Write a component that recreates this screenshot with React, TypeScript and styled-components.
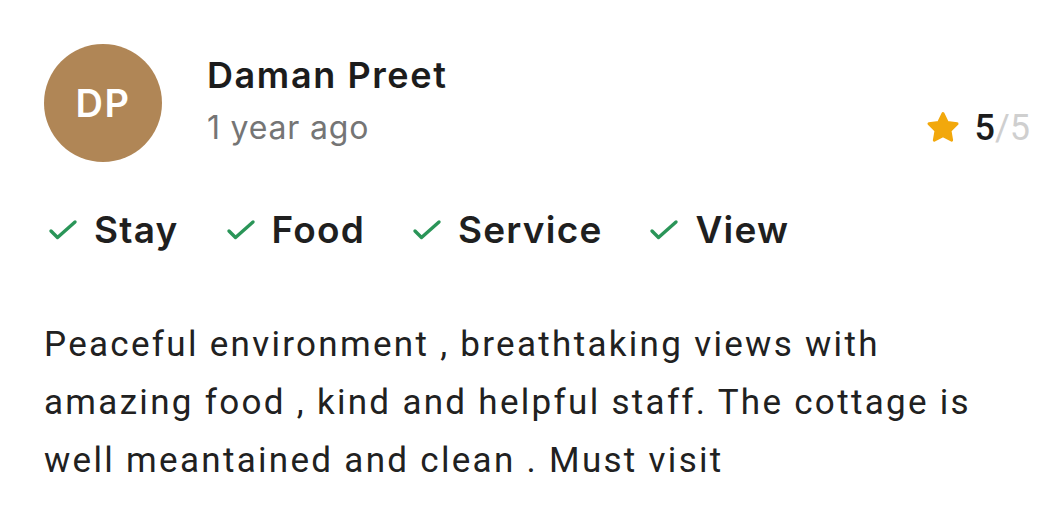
import type { ReactElement } from "react";
import styled, { createGlobalStyle } from "styled-components";

const TAGS = ["Stay", "Food", "Service", "View"];

const REVIEW_TEXT =
  "Peaceful environment , breathtaking views with amazing food , kind and helpful staff. The cottage is well meantained and clean . Must visit";

export default function App(): ReactElement {
  return (
    <>
      <GlobalStyle />
      <ReviewCard>
        <Header>
          <Avatar>DP</Avatar>
          <Info>
            <Name>Daman Preet</Name>
            <MetaRow>
              <Time>1 year ago</Time>
              <Rating>
                <StarIcon />
                <Score>5</Score>
                <OutOf>/5</OutOf>
              </Rating>
            </MetaRow>
          </Info>
        </Header>
        <TagRow>
          {TAGS.map((tag) => (
            <Tag key={tag}>
              <CheckIcon />
              {tag}
            </Tag>
          ))}
        </TagRow>
        <Body>{REVIEW_TEXT}</Body>
      </ReviewCard>
    </>
  );
}

function StarIcon(): ReactElement {
  return (
    <svg width="38" height="38" viewBox="0 0 24 24" aria-hidden="true">
      <path
        d="M12 2.8l2.75 5.6 6.15.9-4.45 4.35 1.05 6.1L12 16.9l-5.5 2.85 1.05-6.1L3.1 9.3l6.15-.9z"
        fill="#F2A80C"
        stroke="#F2A80C"
        strokeWidth="1.8"
        strokeLinejoin="round"
      />
    </svg>
  );
}

function CheckIcon(): ReactElement {
  return (
    <svg width="30" height="22" viewBox="0 0 30 22" aria-hidden="true">
      <polyline
        points="3,12 9.5,18.5 27,3"
        fill="none"
        stroke="#2A9558"
        strokeWidth="3.4"
        strokeLinecap="round"
        strokeLinejoin="round"
      />
    </svg>
  );
}

const GlobalStyle = createGlobalStyle`
  body {
    margin: 0;
    background: #ffffff;
  }
`;

const ReviewCard = styled.div`
  display: flex;
  flex-direction: column;
  padding: 44px 15px 0 44px;
  font-family: Inter, "Noto Sans", sans-serif;
  color: #1f1f1f;
`;

const Header = styled.div`
  display: flex;
  align-items: flex-start;
  gap: 45px;
`;

const Avatar = styled.div`
  flex: none;
  width: 118px;
  height: 118px;
  border-radius: 50%;
  background: #b08656;
  color: #ffffff;
  display: flex;
  align-items: center;
  justify-content: center;
  font-size: 38px;
  font-weight: 600;
  letter-spacing: 1.5px;
`;

const Info = styled.div`
  flex: 1;
  display: flex;
  flex-direction: column;
  padding-top: 10px;
`;

const Name = styled.div`
  font-size: 36px;
  line-height: 42px;
  font-weight: 600;
  letter-spacing: 1.6px;
  color: #1c1c1c;
`;

const MetaRow = styled.div`
  display: flex;
  align-items: center;
  justify-content: space-between;
  margin-top: 12px;
`;

const Time = styled.div`
  font-size: 32px;
  line-height: 40px;
  letter-spacing: 0.8px;
  color: #757575;
`;

const Rating = styled.div`
  display: flex;
  align-items: center;
  font-family: Roboto, "Liberation Sans", sans-serif;
  font-size: 36px;
  line-height: 40px;

  svg {
    margin-right: 12px;
  }
`;

const Score = styled.span`
  font-weight: 500;
  color: #1c1c1c;
`;

const OutOf = styled.span`
  color: #cfcfcf;
`;

const TagRow = styled.div`
  display: flex;
  align-items: center;
  gap: 47px;
  margin-top: 46px;
  padding-left: 4px;
`;

const Tag = styled.div`
  display: flex;
  align-items: center;
  gap: 16px;
  font-size: 37px;
  line-height: 44px;
  font-weight: 600;
  letter-spacing: 1.2px;
  color: #1f1f1f;
`;

const Body = styled.p`
  margin: 64px 0 0;
  max-width: 950px;
  font-family: Roboto, "Liberation Sans", sans-serif;
  font-size: 35px;
  line-height: 58px;
  letter-spacing: 2.3px;
  color: #212121;
`;
